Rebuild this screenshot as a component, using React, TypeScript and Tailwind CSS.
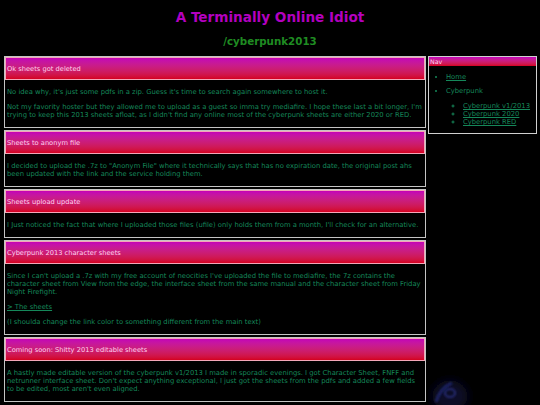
import React from "react";

type Post = { title: string; body: React.ReactNode };

const posts: Post[] = [
  {
    title: "Ok sheets got deleted",
    body: (
      <>
        <p className="my-[7px]">No idea why, it's just some pdfs in a zip. Guess it's time to search again somewhere to host it.</p>
        <p className="my-[7px]">
          Not my favority hoster but they allowed me to upload as a guest so imma try mediafire. I hope these last a bit longer, I'm trying to keep this 2013 sheets afloat, as I didn't find any online most of the cyberpunk sheets are either 2020 or RED.
        </p>
      </>
    ),
  },
  {
    title: "Sheets to anonym file",
    body: (
      <p className="my-[7px]">
        I decided to upload the .7z to "Anonym File" where it technically says that has no expiration date, the original post ahs been updated with the link and the service holding them.
      </p>
    ),
  },
  {
    title: "Sheets upload update",
    body: (
      <p className="my-[7px]">
        I Just noticed the fact that where I uploaded those files (ufile) only holds them from a month, I'll check for an alternative.
      </p>
    ),
  },
  {
    title: "Cyberpunk 2013 character sheets",
    body: (
      <>
        <p className="my-[7px]">
          Since I can't upload a .7z with my free account of neocities I've uploaded the file to mediafire, the 7z contains the character sheet from View from the edge, the interface sheet from the same manual and the character sheet from Friday Night Firefight.
        </p>
        <p className="my-[7px]">
          <a href="#" className="underline">&gt; The sheets</a>
        </p>
        <p className="my-[7px]">(I shoulda change the link color to something different from the main text)</p>
      </>
    ),
  },
  {
    title: "Coming soon: Shitty 2013 editable sheets",
    body: (
      <p className="my-[7px]">
        A hastly made editable version of the cyberpunk v1/2013 I made in sporadic evenings. I got Character Sheet, FNFF and netrunner interface sheet. Don't expect anything exceptional, I just got the sheets from the pdfs and added a few fields to be edited, most aren't even aligned.
      </p>
    ),
  },
];

function Card({ post }: { post: Post }) {
  return (
    <div className="border border-[#c4c4c4] mb-[2px]">
      <div className="h-[23px] flex items-center px-[1px] border border-[#f4a6b8] bg-gradient-to-b from-[#c400b8] to-[#d4001e] text-[#ffd2ee] text-[6.7px] leading-[8px]">
        {post.title}
      </div>
      <div className="pl-[2px] pr-[1px] py-[1px] text-[#15885a] text-[6.8px] leading-[8px]">{post.body}</div>
    </div>
  );
}

export default function App() {
  return (
    <div className="w-[540px] h-[405px] overflow-hidden bg-black font-['DejaVu_Sans',Verdana,sans-serif]">
      <h1 className="pt-[9px] text-center font-bold text-[13.6px] leading-[16px] text-[#b300bf]">A Terminally Online Idiot</h1>
      <h2 className="mt-[10px] text-center font-bold text-[10.3px] leading-[12px] text-[#1f8c22]">/cyberpunk2013</h2>
      <div className="mt-[9px] flex gap-[2px] px-[4px] items-start">
        <div className="w-[422px] shrink-0">
          {posts.map((p) => (
            <Card key={p.title} post={p} />
          ))}
        </div>
        <div className="w-[109px] shrink-0">
          <div className="border border-[#d0d0d0]">
            <div className="h-[9px] flex items-center px-[1px] bg-gradient-to-b from-[#c400b8] to-[#d4001e] text-[#ffd2ee] text-[6.3px] leading-[8px]">
              Nav
            </div>
            <ul className="list-disc pl-[17px] my-[7px] text-[#15885a] text-[6.8px] leading-[8px]">
              <li className="mb-[6px]">
                <a href="#" className="underline">Home</a>
              </li>
              <li>
                Cyberpunk
                <ul className="list-[circle] pl-[17px] mt-[7px]">
                  <li><a href="#" className="underline">Cyberpunk v1/2013</a></li>
                  <li><a href="#" className="underline">Cyberpunk 2020</a></li>
                  <li><a href="#" className="underline">Cyberpunk RED</a></li>
                </ul>
              </li>
            </ul>
          </div>
          <div className="mt-[232px]">
            <svg width="60" height="45" viewBox="0 0 60 45">
              <defs>
                <filter id="bl" x="-50%" y="-50%" width="200%" height="200%">
                  <feGaussianBlur stdDeviation="4" />
                </filter>
                <filter id="bl2" x="-50%" y="-50%" width="200%" height="200%">
                  <feGaussianBlur stdDeviation="1.2" />
                </filter>
              </defs>
              <ellipse cx="22" cy="30" rx="18" ry="16" fill="#070726" filter="url(#bl)" />
              <ellipse cx="22" cy="27" rx="5" ry="4" fill="none" stroke="#2c3488" strokeWidth="1.6" filter="url(#bl2)" />
              <path d="M8 36 Q12 22 24 17" fill="none" stroke="#1c2260" strokeWidth="3" filter="url(#bl2)" />
            </svg>
          </div>
        </div>
      </div>
    </div>
  );
}
